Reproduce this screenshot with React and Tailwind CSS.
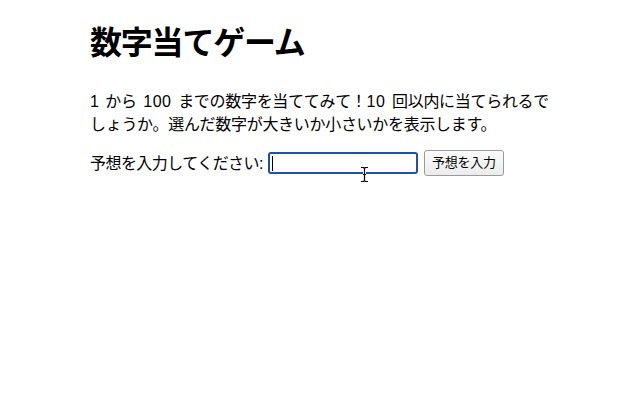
import React from "react";

export default function App() {
  return (
    <div className="relative w-[640px] h-[400px] bg-white text-black">
      <div className="pl-[90px] pt-[23px] w-[580px] font-['Liberation_Sans','Noto_Sans_CJK_JP',sans-serif]">
        <h1 className="text-[32px] font-bold leading-[40px] tracking-[-1.2px]">数字当てゲーム</h1>
        <p className="mt-[27px] text-[16px] leading-[23px] w-[470px] tracking-[-0.3px] [word-spacing:2.5px]">
          1 から <span className="tracking-[0.5px]">100</span> までの数字を当ててみて！<span className="tracking-[0.5px]">10</span> 回以内に当てられるで<br />しょうか。選んだ数字が大きいか小さいかを表示します。
        </p>
        <div className="mt-[14px] flex items-center text-[16px] leading-[23px]">
          <label className="tracking-[-0.55px]">予想を入力してください:</label>
          <div className="ml-[5px] w-[150px] h-[22px] border-2 border-[#1f4fb0] rounded-[3px] flex items-center pl-[2px]">
            <div className="w-[1px] h-[15px] bg-black"></div>
          </div>
          <button className="ml-[6px] h-[26px] px-[7px] text-[13px] tracking-[-0.2px] border border-[#9a9a9a] rounded-[3px] bg-gradient-to-b from-[#fbfbfb] to-[#ececec] leading-[24px]">
            予想を入力
          </button>
        </div>
      </div>
      <svg
        className="absolute left-[360px] top-[166px]"
        width="9"
        height="17"
        viewBox="0 0 9 17"
      >
        <path d="M1 1.5h2.5L4.5 2.5L5.5 1.5H8M4.5 2.5V14.5M1 15.5h2.5L4.5 14.5L5.5 15.5H8M3 8.5h3" stroke="white" strokeWidth="3" fill="none" />
        <path d="M1 1.5h2.5L4.5 2.5L5.5 1.5H8M4.5 2.5V14.5M1 15.5h2.5L4.5 14.5L5.5 15.5H8M3 8.5h3" stroke="black" strokeWidth="1.2" fill="none" />
      </svg>
    </div>
  );
}
